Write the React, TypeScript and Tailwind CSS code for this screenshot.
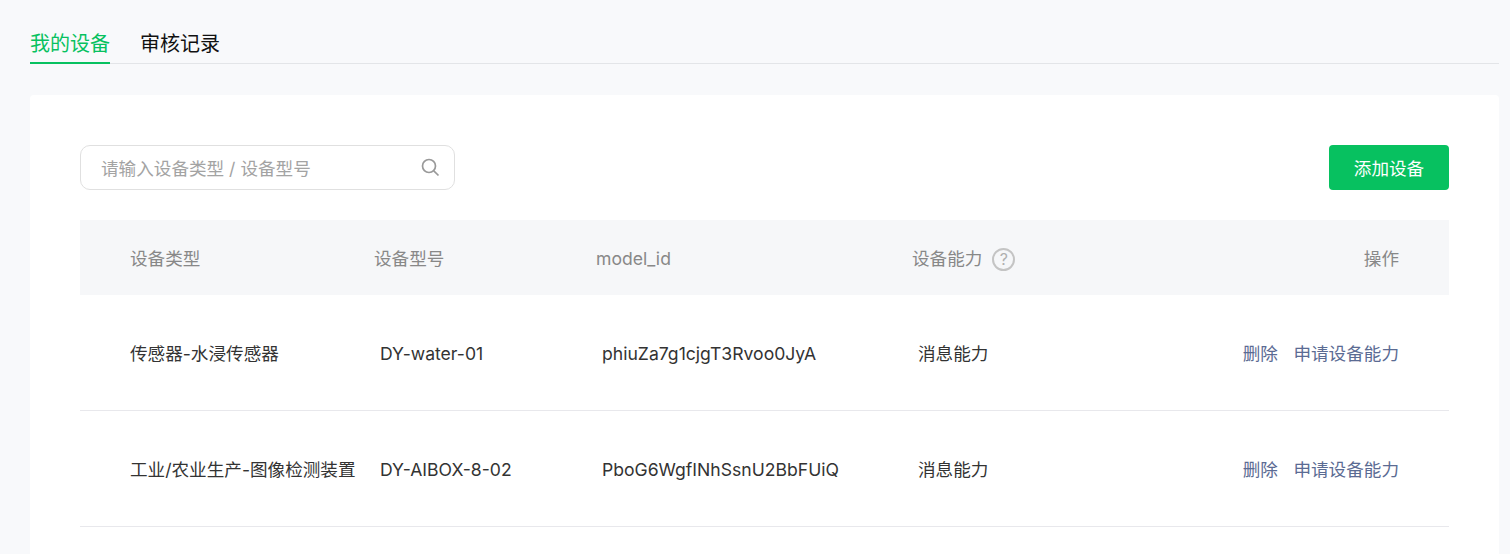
import React from "react";

const F = '"Inter", "Noto Sans CJK SC", sans-serif';

function Row({ a, b, c }: { a: string; b: string; c: string }) {
  return (
    <div className="flex items-center h-[116px] border-b border-[#e8e8ec] text-[#333333] text-[17.6px] pl-[50px] pr-[50px] pt-[4px]">
      <div className="w-[250px] shrink-0 whitespace-nowrap">{a}</div>
      <div className="w-[222px] shrink-0">{b}</div>
      <div className="w-[316px] shrink-0">{c}</div>
      <div className="flex-1">消息能力</div>
      <div className="flex gap-[15.5px] text-[#5b6b93]">
        <span>删除</span>
        <span>申请设备能力</span>
      </div>
    </div>
  );
}

export default function App() {
  return (
    <div className="h-[554px] overflow-hidden bg-[#f8f9fb] pl-[30px] pr-[11px] pt-[22px]" style={{ fontFamily: F }}>
      <div className="flex gap-[30px] border-b border-[#e3e5e8] h-[42px] text-[20px] leading-[44px]">
        <div className="h-[42px] text-[#07c160] border-b-2 border-[#07c160]">我的设备</div>
        <div className="text-[#111111]">审核记录</div>
      </div>
      <div className="mt-[31px] bg-white rounded-[4px] px-[50px] pt-[50px] h-[600px]">
        <div className="flex items-center justify-between h-[45px]">
          <div className="flex items-center justify-between w-[375px] h-[45px] border border-[#e0e0e0] rounded-[10px] pl-[20px] pr-[13px] text-[17.6px] text-[#a3a3a3]">
            <span className="pt-[4px]">请输入设备类型 / 设备型号</span>
            <svg className="mt-[1px]" width="20" height="20" viewBox="0 0 20 20" fill="none" stroke="#999999" strokeWidth="1.7">
              <circle cx="8" cy="8" r="6.5" />
              <path d="M12.8 12.8l4.7 4.7" />
            </svg>
          </div>
          <button className="w-[120px] h-[45px] pt-[4px] rounded-[4px] bg-[#07c160] text-white text-[17.6px]">添加设备</button>
        </div>
        <div className="mt-[30px] flex items-center h-[75px] bg-[#f6f7f9] text-[#888888] text-[17.6px] pl-[50px] pr-[50px] pt-[4px]">
          <div className="w-[244px] shrink-0">设备类型</div>
          <div className="w-[222px] shrink-0">设备型号</div>
          <div className="w-[316px] shrink-0">model_id</div>
          <div className="flex-1 flex items-center gap-[10px]">
            设备能力
            <span className="w-[23px] h-[23px] rounded-full border-2 border-[#c4c4c4] flex items-center justify-center text-[16px] text-[#b0b0b0] leading-none">?</span>
          </div>
          <div>操作</div>
        </div>
        <Row a="传感器-水浸传感器" b="DY-water-01" c="phiuZa7g1cjgT3Rvoo0JyA" />
        <Row a="工业/农业生产-图像检测装置" b="DY-AIBOX-8-02" c="PboG6WgfINhSsnU2BbFUiQ" />
      </div>
    </div>
  );
}
